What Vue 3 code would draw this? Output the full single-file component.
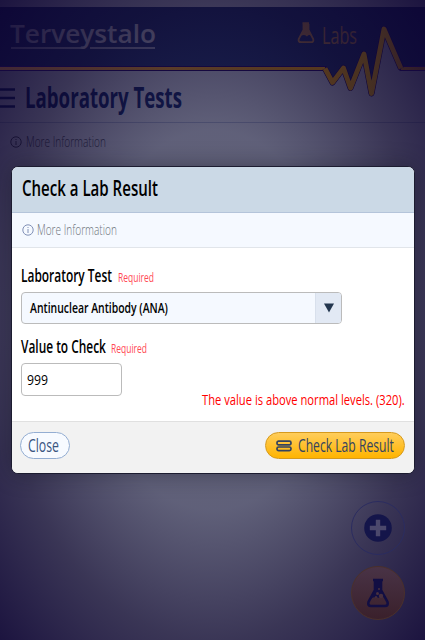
<script setup>
import { h, ref } from 'vue'

/* Narrows a text element horizontally until it is as wide as its line. */
const fit = (vnode) => {
  const el = vnode.el
  const k = Number(el.dataset.width) / el.getComputedTextLength()
  el.setAttribute('transform', `scale(${k} 1)`)
}

/* One line of condensed lettering, fitted to a given width. */
const Line = (p) =>
  h('svg', { width: p.w, height: p.h, style: { display: 'block', flex: 'none', overflow: 'visible' } }, [
    h('text', {
      x: 0,
      y: p.base,
      'data-width': p.w,
      fill: 'currentColor',
      'font-size': p.size,
      'font-weight': p.weight || 400,
      onVnodeMounted: fit
    }, p.t)
  ])
Line.props = ['t', 'w', 'h', 'base', 'size', 'weight']

const test = ref('Antinuclear Antibody (ANA)')
const value = ref('999')
</script>

<template>
  <div class="screen">
    <header class="top">
      <svg class="band" width="425" height="100" viewBox="0 0 425 100">
        <path d="M0 7H425V69H401L384 28.500L371.500 94L364 53L350.500 88L343.500 68L332.500 82.500L325 69H0Z" />
      </svg>
      <div class="brand">
        <Line t="Terveystalo" :w="146" :h="34" :base="26" :size="24.500" :weight="550" />
        <svg class="rule" width="146" height="2"><path d="M1 1H71M80 1H145" /></svg>
      </div>
      <div class="labs">
        <svg width="18" height="22" viewBox="0 0 18 22">
          <path d="M5.500 1.200H12M6.500 2V8L1.700 17Q1 20.200 4 20.200H14Q17 20.200 16.200 17L11.500 8V2" fill="none" stroke="currentColor" stroke-width="1.800" />
          <path d="M6 1H12V8L15 14Q12 12 10 14.500Q7 12 4 14L6.500 8Z" fill="currentColor" />
        </svg>
        <Line t="Labs" :w="35" :h="30" :base="22.500" :size="24" :weight="500" />
      </div>
    </header>
    <div class="title">
      <svg width="15" height="20"><path d="M0 1.500H15M0 10H15M0 18.500H15" stroke="currentColor" stroke-width="2.600" /></svg>
      <Line t="Laboratory Tests" :w="157" :h="40" :base="30" :size="28.500" :weight="700" />
    </div>
    <div class="page-info">
      <svg width="12" height="12" viewBox="0 0 12 12"><circle cx="6" cy="6" r="5.200" fill="none" stroke="currentColor" /><path d="M6 3V4M6 5V9" stroke="currentColor" /></svg>
      <Line t="More Information" :w="80" :h="20" :base="15" :size="15" :weight="300" />
    </div>
    <button class="fab plus">
      <svg width="28" height="28" viewBox="0 0 28 28"><circle cx="14" cy="14" r="13.800" fill="#14154a" /><path d="M14 8V20M8 14H20" stroke="#4b486c" stroke-width="4.400" stroke-linecap="square" /></svg>
    </button>
    <button class="fab flask">
      <svg width="24" height="30" viewBox="0 0 24 30">
        <path d="M7 2H17M9 3V12L2.500 24Q1.500 28 5 28H19Q22.500 28 21.500 24L15 12V3" fill="none" stroke="#120e43" stroke-width="2.600" />
        <path d="M9 3H15V12L20.500 21Q16 17 13 20Q8 17 3.500 22L9 12Z" fill="#120e43" />
        <g fill="#47303f"><circle cx="11.500" cy="15.500" r="1.500" /><circle cx="15" cy="18" r="2.200" /><circle cx="13" cy="11" r="1" /><circle cx="10" cy="19" r="1" /></g>
      </svg>
    </button>
    <div class="shade"></div>
    <svg class="pulse" width="425" height="100" viewBox="0 0 425 100">
      <defs>
        <linearGradient id="amber" gradientUnits="userSpaceOnUse" x1="0" y1="0" x2="425" y2="0">
          <stop offset="0" stop-color="#402735" /><stop offset=".4" stop-color="#5a3c29" /><stop offset=".75" stop-color="#55381f" /><stop offset=".87" stop-color="#463022" /><stop offset="1" stop-color="#2d192d" />
        </linearGradient>
      </defs>
      <g fill="none" stroke-linejoin="round">
        <path d="M0 68.500H325L332.500 82.500L343.500 68L350.500 88L364 54L371.500 93.500L384 29L401 68.500H425" stroke="#15083f" stroke-width="5" />
        <path d="M0 68.501H325L325.100 68.500H425" stroke="url(#amber)" stroke-width="3" stroke-dasharray="325 76 24" />
        <path d="M325 68.500L332.500 82.500L343.500 68L350.500 88L364 54L371.500 93.500L384 29L401 68.500" stroke="#130839" stroke-width="6" />
        <path d="M325 68.500L332.500 82.500L343.500 68L350.500 88L364 54L371.500 93.500L384 29L401 68.500" stroke="url(#amber)" stroke-width="4.800" />
      </g>
    </svg>

    <section class="dialog">
      <div class="head"><Line t="Check a Lab Result" :w="136" :h="45" :base="29" :size="22" :weight="550" /></div>
      <div class="info">
        <svg width="12" height="12" viewBox="0 0 12 12"><circle cx="6" cy="6" r="5.200" fill="none" stroke="#8090b6" /><path d="M6 3V4M6 5V9" stroke="#8090b6" /></svg>
        <Line t="More Information" :w="80" :h="20" :base="15" :size="15" :weight="300" />
      </div>
      <div class="body">
        <div class="label">
          <Line t="Laboratory Test" :w="91" :h="24" :base="18" :size="18" :weight="550" />
          <Line class="req" t="Required" :w="36" :h="24" :base="18" :size="12.500" />
        </div>
        <div class="select">
          <Line :t="test" :w="138" :h="30" :base="20" :size="14.500" :weight="550" />
          <span class="arrow"><svg width="10" height="10"><path d="M0 .500H10L5 9.500Z" fill="#23364e" /></svg></span>
        </div>
        <div class="label second">
          <Line t="Value to Check" :w="85" :h="24" :base="18" :size="18" :weight="550" />
          <Line class="req" t="Required" :w="36" :h="24" :base="18" :size="12.500" />
        </div>
        <div class="entry"><Line :t="value" :w="21" :h="31" :base="21" :size="15" :weight="500" /></div>
        <div class="warning"><Line t="The value is above normal levels. (320)." :w="203" :h="20" :base="14" :size="14.500" :weight="500" /></div>
      </div>
      <footer class="foot">
        <button class="close"><Line t="Close" :w="31" :h="25" :base="19" :size="18.500" :weight="500" /></button>
        <button class="check">
          <svg width="16" height="12" viewBox="0 0 16 12"><g fill="none" stroke="#34435f" stroke-width="1.700"><rect x="1" y="1.200" width="14" height="3.600" rx="1.600" /><rect x="1" y="7" width="14" height="3.600" rx="1.600" /></g></svg>
          <Line t="Check Lab Result" :w="96" :h="25" :base="19" :size="18.500" :weight="500" />
        </button>
      </footer>
    </section>
  </div>
</template>

<style>
body { margin: 0; }
</style>
<style scoped>
* { box-sizing: border-box; }
.screen { position: relative; width: 425px; height: 640px; overflow: hidden; background: #fbfcff; font-family: "Open Sans", "Noto Sans", sans-serif; }
button { font: inherit; padding: 0; margin: 0; }
.top { height: 71px; padding: 17px 68px 0 10px; display: flex; justify-content: space-between; position: relative; }
.band { position: absolute; left: 0; top: 0; fill: #40538a; }
.brand { position: relative; color: #fff; }
.rule { display: block; margin-top: -4px; stroke: #fff; stroke-width: 1.3; }
.labs { position: relative; display: flex; gap: 7px; padding-top: 5px; color: #ffb85a; }
.labs svg:last-child { margin-top: -1px; }
.title { height: 52px; display: flex; gap: 10px; padding-top: 7px; border-bottom: 1px solid #c5cce2; color: #283a78; }
.title svg:first-child { margin-top: 10px; }
.page-info { display: flex; align-items: center; gap: 4px; padding: 9px 0 0 10px; color: #606060; }
.fab { position: absolute; left: 351px; width: 54px; height: 54px; border-radius: 50%; display: flex; align-items: center; justify-content: center; z-index: 3; }
.plus { top: 501px; background: transparent; border: 1px solid #2b2c60; }
.flask { top: 566px; background: linear-gradient(#493346, #3a202b); border: 1px solid #4a302b; }
.shade { position: absolute; inset: 0; z-index: 1; background: radial-gradient(ellipse farthest-corner at 50% 50%, rgba(5,5,35,.6) 0%, rgba(5,5,43,.63) 42%, rgba(6,0,40,.79) 71%, rgba(9,0,47,.92) 100%); }
.pulse { position: absolute; left: 0; top: 0; z-index: 2; }
.dialog { position: absolute; left: 11px; top: 166px; width: 404px; height: 308px; border: 1px solid #1c1c30; border-radius: 7px; overflow: hidden; background: #fff; z-index: 4; box-shadow: 0 0 22px rgba(15,15,30,.4); color: #000; }
.head { height: 46px; padding-left: 10px; background: #cbd9e6; border-bottom: 1px solid #b4c4da; }
.info { height: 35px; display: flex; align-items: center; gap: 3px; padding-left: 10px; background: #f5f9ff; border-bottom: 1px solid #e1e5ea; color: #6d747b; }
.body { height: 173px; padding: 16px 9px 0; }
.label { display: flex; gap: 6px; height: 28px; }
.second { margin-top: 11px; gap: 5px; }
.req { color: #ff4a55; }
.select { display: flex; justify-content: space-between; width: 321px; height: 32px; border: 1px solid #bbb; border-radius: 4px; background: #f5f9ff; padding-left: 8px; overflow: hidden; }
.arrow { width: 26px; display: flex; align-items: center; justify-content: center; border-left: 1px solid #d8e0ec; background: #e2e9f4; }
.entry { width: 101px; height: 33px; border: 1px solid #bbb; border-radius: 4px; padding-left: 5px; }
.warning { display: flex; justify-content: flex-end; margin-top: -5px; color: #f00; }
.foot { height: 53px; display: flex; justify-content: space-between; align-items: flex-start; border-top: 1px solid #e0e0e0; background: #f2f2f2; padding: 10px 9px 0 8px; }
.close { height: 27px; width: 50px; border: 1px solid #93add2; border-radius: 14px; background: #f7faff; color: #3a557f; padding-left: 7px; }
.check { height: 27px; width: 140px; display: flex; align-items: center; gap: 6px; border: 1px solid #d69a1d; border-radius: 14px; background: linear-gradient(#ffcd5b, #ffb400); color: #34435f; padding-left: 10px; }
</style>
